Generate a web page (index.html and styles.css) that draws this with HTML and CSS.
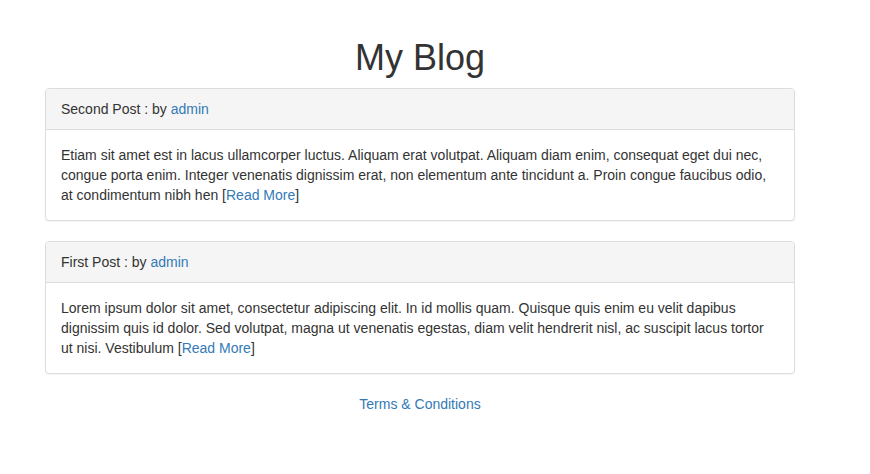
FILE: index.html
```html
<!DOCTYPE html>
<html>
<head>
<meta charset="utf-8">
<title>My Blog</title>
<link rel="stylesheet" href="styles.css">
</head>
<body>
<div class="container">
  <h1 class="title">My Blog</h1>
  <div class="panel">
    <div class="panel-heading">Second Post : by <a href="#">admin</a></div>
    <div class="panel-body">Etiam sit amet est in lacus ullamcorper luctus. Aliquam erat volutpat. Aliquam diam enim, consequat eget dui nec, congue porta enim. Integer venenatis dignissim erat, non elementum ante tincidunt a. Proin congue faucibus odio, at condimentum nibh hen [<a href="#">Read More</a>]</div>
  </div>
  <div class="panel">
    <div class="panel-heading">First Post : by <a href="#">admin</a></div>
    <div class="panel-body">Lorem ipsum dolor sit amet, consectetur adipiscing elit. In id mollis quam. Quisque quis enim eu velit dapibus dignissim quis id dolor. Sed volutpat, magna ut venenatis egestas, diam velit hendrerit nisl, ac suscipit lacus tortor ut nisi. Vestibulum [<a href="#">Read More</a>]</div>
  </div>
  <div class="footer"><a href="#">Terms &amp; Conditions</a></div>
</div>
</body>
</html>
```

FILE: styles.css
```css
html, body {
  margin: 0;
  padding: 0;
  background: #fff;
}
body {
  font-family: "Liberation Sans", Arial, Helvetica, sans-serif;
  font-size: 14px;
  line-height: 20px;
  color: #333;
}
a {
  color: #337ab7;
  text-decoration: none;
}
.container {
  width: 750px;
  margin-left: 45px;
}
.title {
  margin: 38px 0 10px;
  font-size: 36px;
  font-weight: 500;
  line-height: 1.1;
  text-align: center;
  color: #333;
}
.panel {
  margin-bottom: 20px;
  background: #fff;
  border: 1px solid #ddd;
  border-radius: 4px;
  box-shadow: 0 1px 1px rgba(0, 0, 0, 0.05);
}
.panel-heading {
  padding: 10px 15px;
  background: #f5f5f5;
  border-bottom: 1px solid #ddd;
  border-radius: 3px 3px 0 0;
}
.panel-body {
  padding: 15px;
}
.footer {
  text-align: center;
}
```
